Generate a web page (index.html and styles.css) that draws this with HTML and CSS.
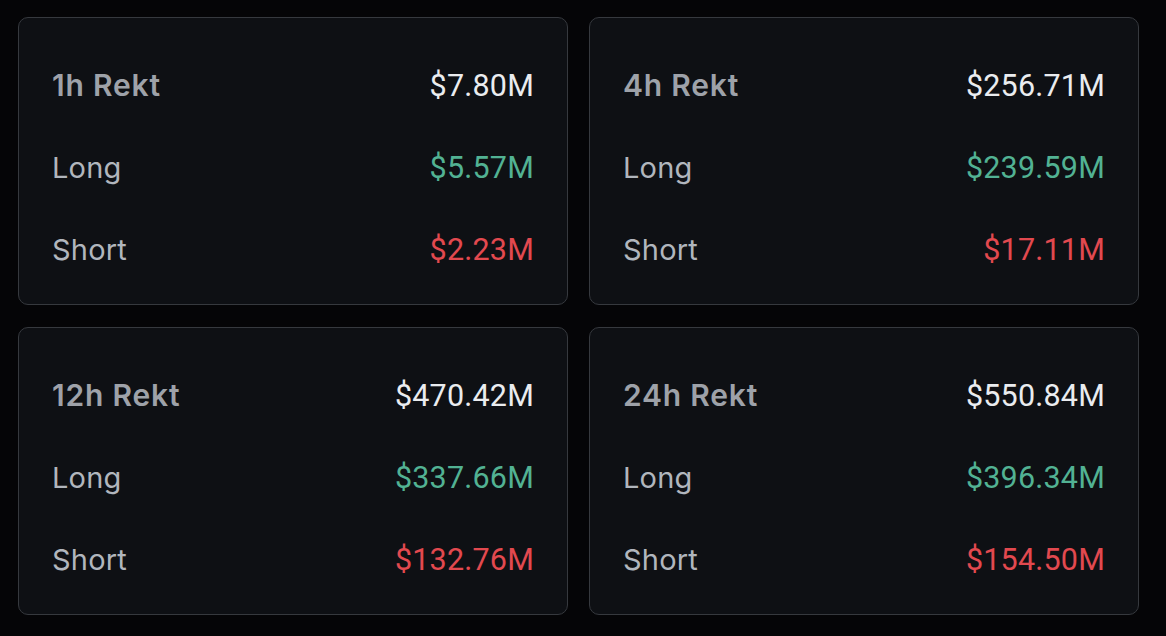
FILE: index.html
```html
<!DOCTYPE html>
<html>
<head>
<meta charset="utf-8">
<link rel="stylesheet" href="styles.css">
</head>
<body>
<div class="grid">
  <div class="card">
    <div class="row"><span class="title">1h Rekt</span><span class="val">$7.80M</span></div>
    <div class="row"><span class="lbl">Long</span><span class="val up">$5.57M</span></div>
    <div class="row"><span class="lbl">Short</span><span class="val down">$2.23M</span></div>
  </div>
  <div class="card">
    <div class="row"><span class="title">4h Rekt</span><span class="val">$256.71M</span></div>
    <div class="row"><span class="lbl">Long</span><span class="val up">$239.59M</span></div>
    <div class="row"><span class="lbl">Short</span><span class="val down">$17.11M</span></div>
  </div>
  <div class="card">
    <div class="row"><span class="title">12h Rekt</span><span class="val">$470.42M</span></div>
    <div class="row"><span class="lbl">Long</span><span class="val up">$337.66M</span></div>
    <div class="row"><span class="lbl">Short</span><span class="val down">$132.76M</span></div>
  </div>
  <div class="card">
    <div class="row"><span class="title">24h Rekt</span><span class="val">$550.84M</span></div>
    <div class="row"><span class="lbl">Long</span><span class="val up">$396.34M</span></div>
    <div class="row"><span class="lbl">Short</span><span class="val down">$154.50M</span></div>
  </div>
</div>
</body>
</html>
```
FILE: styles.css
```css
html, body {
  margin: 0;
  padding: 0;
  background: #050507;
}
body {
  font-family: "Inter", "Noto Sans", sans-serif;
}
.grid {
  display: grid;
  grid-template-columns: 550px 550px;
  grid-template-rows: 288px 288px;
  column-gap: 21px;
  row-gap: 22px;
  padding: 17px 0 0 18px;
}
.card {
  box-sizing: border-box;
  background: #0e1014;
  border: 1.5px solid #36393e;
  border-radius: 10px;
  padding: 49px 33px 0 33px;
  display: flex;
  flex-direction: column;
  gap: 46px;
}
.row {
  display: flex;
  justify-content: space-between;
  align-items: center;
  height: 36px;
}
.title {
  font-size: 30px;
  font-weight: 600;
  letter-spacing: 0.8px;
  color: #9ea2a9;
}
.lbl {
  font-size: 29px;
  font-weight: 400;
  letter-spacing: 0.2px;
  color: #b1b6bd;
}
.val {
  font-family: "Roboto", "Inter", sans-serif;
  font-size: 30.5px;
  font-weight: 400;
  letter-spacing: 0.2px;
  color: #eaecef;
}
.val.up { color: #52b293; }
.val.down { color: #e2494f; }
```
